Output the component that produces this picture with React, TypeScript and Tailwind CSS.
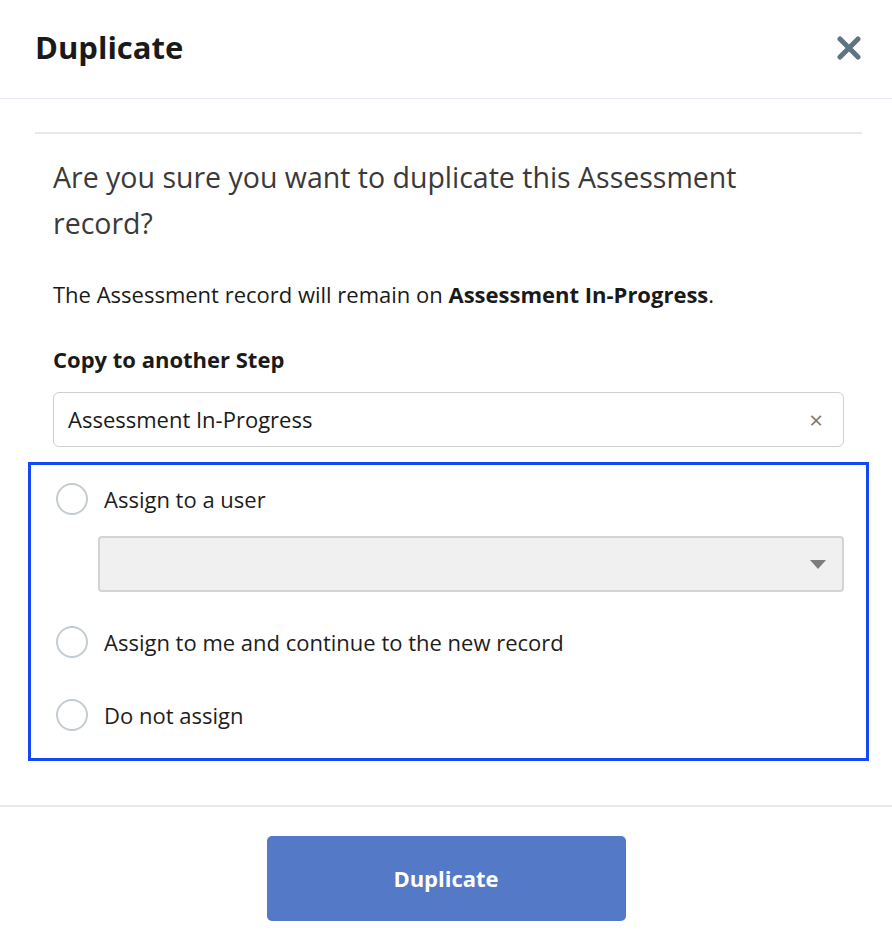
const font = { fontFamily: "'Open Sans', 'Noto Sans', sans-serif" };

function Radio({ label }: { label: string }) {
  return (
    <label className="flex h-8 items-center gap-4">
      <span className="h-8 w-8 shrink-0 rounded-full border-2 border-[#c3ccd3] bg-white" />
      <span className="text-[22px] text-[#1d1d1d]">{label}</span>
    </label>
  );
}

export default function App() {
  return (
    <div className="h-[948px] w-[892px] bg-white" style={font}>
      <header className="flex h-[99px] items-center justify-between border-b border-[#e4e9f0] pb-[3px] pl-[35px] pr-[27px]">
        <h1 className="text-[31px] font-bold text-[#1a1a1a]">Duplicate</h1>
        <button className="flex h-8 w-8 items-center justify-center">
          <svg width="24" height="24" viewBox="0 0 24 24">
            <path d="M3 3 L21 21 M21 3 L3 21" stroke="#5f7380" strokeWidth="5" strokeLinecap="round" />
          </svg>
        </button>
      </header>

      <div className="pl-[35px] pr-[30px] pt-[33px]">
        <div className="border-t-2 border-[#e4e9f0] px-[18px]">
          <p className="mt-[20px] max-w-[760px] text-[28.5px] leading-[46px] text-[#3a3a3a]">
            Are you sure you want to duplicate this Assessment record?
          </p>
          <p className="mt-[32px] text-[22px] leading-[32px] text-[#1a1a1a]">
            The Assessment record will remain on <b>Assessment In-Progress</b>.
          </p>
          <p className="mt-[33px] text-[22px] font-bold leading-[32px] text-[#1a1a1a]">Copy to another Step</p>
          <div className="mt-[17px] flex h-[55px] items-center justify-between rounded-md border border-[#cfcfcf] pl-[14px] pr-[20px]">
            <span className="text-[22px] text-[#1a1a1a]">Assessment In-Progress</span>
            <span className="text-[24px] text-[#7a7a7a]">×</span>
          </div>

          <div className="-mx-[25px] mt-[15px] border-[3px] border-[#1447f5] px-[22px] pb-[27px] pt-[18px]">
            <div className="pl-[3px]">
              <Radio label="Assign to a user" />
            </div>
            <div className="ml-[45px] mt-[21px] flex h-[56px] items-center justify-end rounded-[4px] border-2 border-[#d4d4d4] bg-[#f0f0f0] pr-[16px]">
              <svg width="16" height="9" viewBox="0 0 16 9">
                <path d="M0 0 H16 L8 9 Z" fill="#7d7d7d" />
              </svg>
            </div>
            <div className="mt-[34px] pl-[3px]">
              <Radio label="Assign to me and continue to the new record" />
            </div>
            <div className="mt-[41px] pl-[3px]">
              <Radio label="Do not assign" />
            </div>
          </div>
        </div>
      </div>

      <footer className="mt-[44px] flex justify-center border-t-2 border-[#e4e9f0] pt-[29px]">
        <button className="h-[85px] w-[359px] rounded-[5px] bg-[#5479c6] text-[22px] font-bold text-white">
          Duplicate
        </button>
      </footer>
    </div>
  );
}
